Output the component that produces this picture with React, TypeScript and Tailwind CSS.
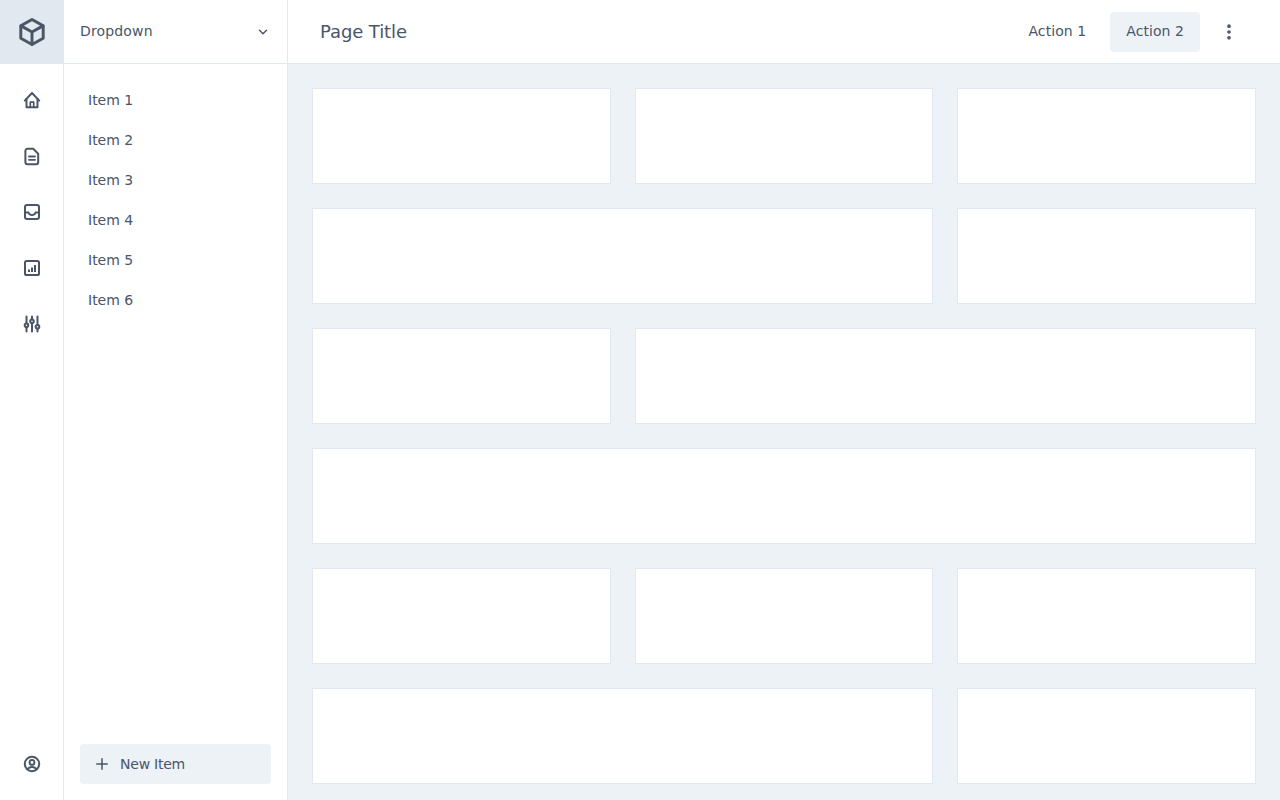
import type { ReactNode } from "react";
import { ChevronDown, EllipsisVertical, Plus } from "lucide-react";

function Glyph({ children, className = "h-6 w-6" }: { children: ReactNode; className?: string }) {
  return (
    <svg viewBox="0 0 24 24" fill="none" stroke="currentColor" strokeWidth={2} strokeLinecap="round" strokeLinejoin="round" className={className}>
      {children}
    </svg>
  );
}

const railIcons = [
  // home
  <>
    <path d="M4.8 12.6 12 5l7.2 7.6" strokeWidth={2} />
    <path d="M6.5 11v8.2h11V11" strokeWidth={2} />
    <path d="M10.3 19v-4.8h3.4V19" strokeWidth={1.7} />
  </>,
  // document
  <>
    <path d="M7.4 4.8h5.8l5 5v8.4a2 2 0 0 1-2 2H7.4a2 2 0 0 1-2-2V6.8a2 2 0 0 1 2-2Z" strokeWidth={2} />
    <path d="M9 12.5h6M9 15.8h6" strokeWidth={1.8} />
  </>,
  // inbox
  <>
    <rect x="5" y="5" width="14" height="14" rx="2.2" />
    <path d="M5 12.5h3.5c.8 2 2 2.6 3.5 2.6s2.7-.6 3.5-2.6H19" strokeWidth={2} />
  </>,
  // chart
  <>
    <rect x="5" y="5" width="14" height="14" rx="1.6" />
    <path d="M9 13.5v2.5M12 11.5V16M15 9v7" strokeWidth={2} strokeLinecap="butt" />
  </>,
  // sliders
  <>
    <path d="M6.5 4.5v6.5M6.5 15.5v4M12 4.5V7M12 11.5v8M17.5 4.5v8M17.5 17v2.5" strokeWidth={2} />
    <circle cx="6.5" cy="13.2" r="1.8" strokeWidth={2} />
    <circle cx="12" cy="9.2" r="1.8" strokeWidth={2} />
    <circle cx="17.5" cy="14.8" r="1.8" strokeWidth={2} />
  </>,
];

const items = ["Item 1", "Item 2", "Item 3", "Item 4", "Item 5", "Item 6"];
const spans = [1, 1, 1, 2, 1, 1, 2, 3, 1, 1, 1, 2, 1];

const spanClass: Record<number, string> = {
  1: "col-span-1",
  2: "col-span-2",
  3: "col-span-3",
};

export default function App() {
  return (
    <div className="flex h-[800px] w-full overflow-hidden bg-white font-['DejaVu_Sans',sans-serif] text-sm text-[#4a5568] opacity-[0.999] [text-rendering:optimizeSpeed]">
      <aside className="flex w-16 shrink-0 flex-col border-r border-[#e2e8f0]">
        <div className="flex h-16 shrink-0 items-center justify-center bg-[#e2e8f0]">
          <Glyph className="h-8 w-8">
            <path d="M12 2.6 20.4 7.3v9.4L12 21.4l-8.4-4.7V7.3Z" strokeWidth={2.2} />
            <path d="M3.8 7.4 12 12l8.2-4.6M12 12v9.2" strokeWidth={2.2} />
          </Glyph>
        </div>
        <nav className="flex flex-1 flex-col pt-2">
          {railIcons.map((icon, i) => (
            <div key={i} className="flex h-14 items-center justify-center">
              <Glyph>{icon}</Glyph>
            </div>
          ))}
        </nav>
        <div className="mb-4 flex h-10 items-center justify-center">
          <Glyph>
            <circle cx="12" cy="12" r="7.2" strokeWidth={2} />
            <circle cx="12" cy="10.4" r="2.4" strokeWidth={1.9} />
            <path d="M7.6 17.4c.8-1.6 2.4-2.4 4.4-2.4s3.6.8 4.4 2.4" strokeWidth={1.9} />
          </Glyph>
        </div>
      </aside>
      <aside className="flex w-56 shrink-0 flex-col border-r border-[#e2e8f0]">
        <div className="flex h-16 shrink-0 items-center justify-between border-b border-[#e2e8f0] px-4">
          <span className="-translate-y-px tracking-[0.15px]">Dropdown</span>
          <ChevronDown className="mr-px h-3.5 w-3.5" strokeWidth={2.5} />
        </div>
        <ul className="flex-1 p-4">
          {items.map((item) => (
            <li key={item} className="flex h-10 items-center px-2">{item}</li>
          ))}
        </ul>
        <div className="px-4 pb-4">
          <button className="flex h-10 w-full items-center gap-[9px] rounded bg-[#edf2f7] pl-[13px] pr-3 text-[#4a5568]">
            <Plus className="h-[18px] w-[18px]" strokeWidth={2} />
            <span className="tracking-[-0.23px]">New Item</span>
          </button>
        </div>
      </aside>
      <div className="flex min-w-0 flex-1 flex-col">
        <header className="flex h-16 shrink-0 items-center justify-between border-b border-[#e2e8f0] pl-8 pr-8">
          <h1 className="text-lg tracking-[-0.1px]">Page Title</h1>
          <div className="flex items-center gap-2">
            <button className="flex h-10 items-center rounded px-4 pb-0.5 tracking-[0.07px]">Action 1</button>
            <button className="flex h-10 items-center rounded bg-[#edf2f7] px-4 pb-0.5 tracking-[0.07px]">Action 2</button>
            <button className="flex h-10 w-10 items-center justify-center pl-px">
              <EllipsisVertical className="h-5 w-5" strokeWidth={2.4} />
            </button>
          </div>
        </header>
        <main className="flex-1 overflow-hidden bg-[#edf2f7] p-6">
          <div className="grid grid-cols-3 gap-6">
            {spans.map((span, i) => (
              <div key={i} className={`h-24 border border-[#e2e8f0] bg-white ${spanClass[span]}`} />
            ))}
          </div>
        </main>
      </div>
    </div>
  );
}
